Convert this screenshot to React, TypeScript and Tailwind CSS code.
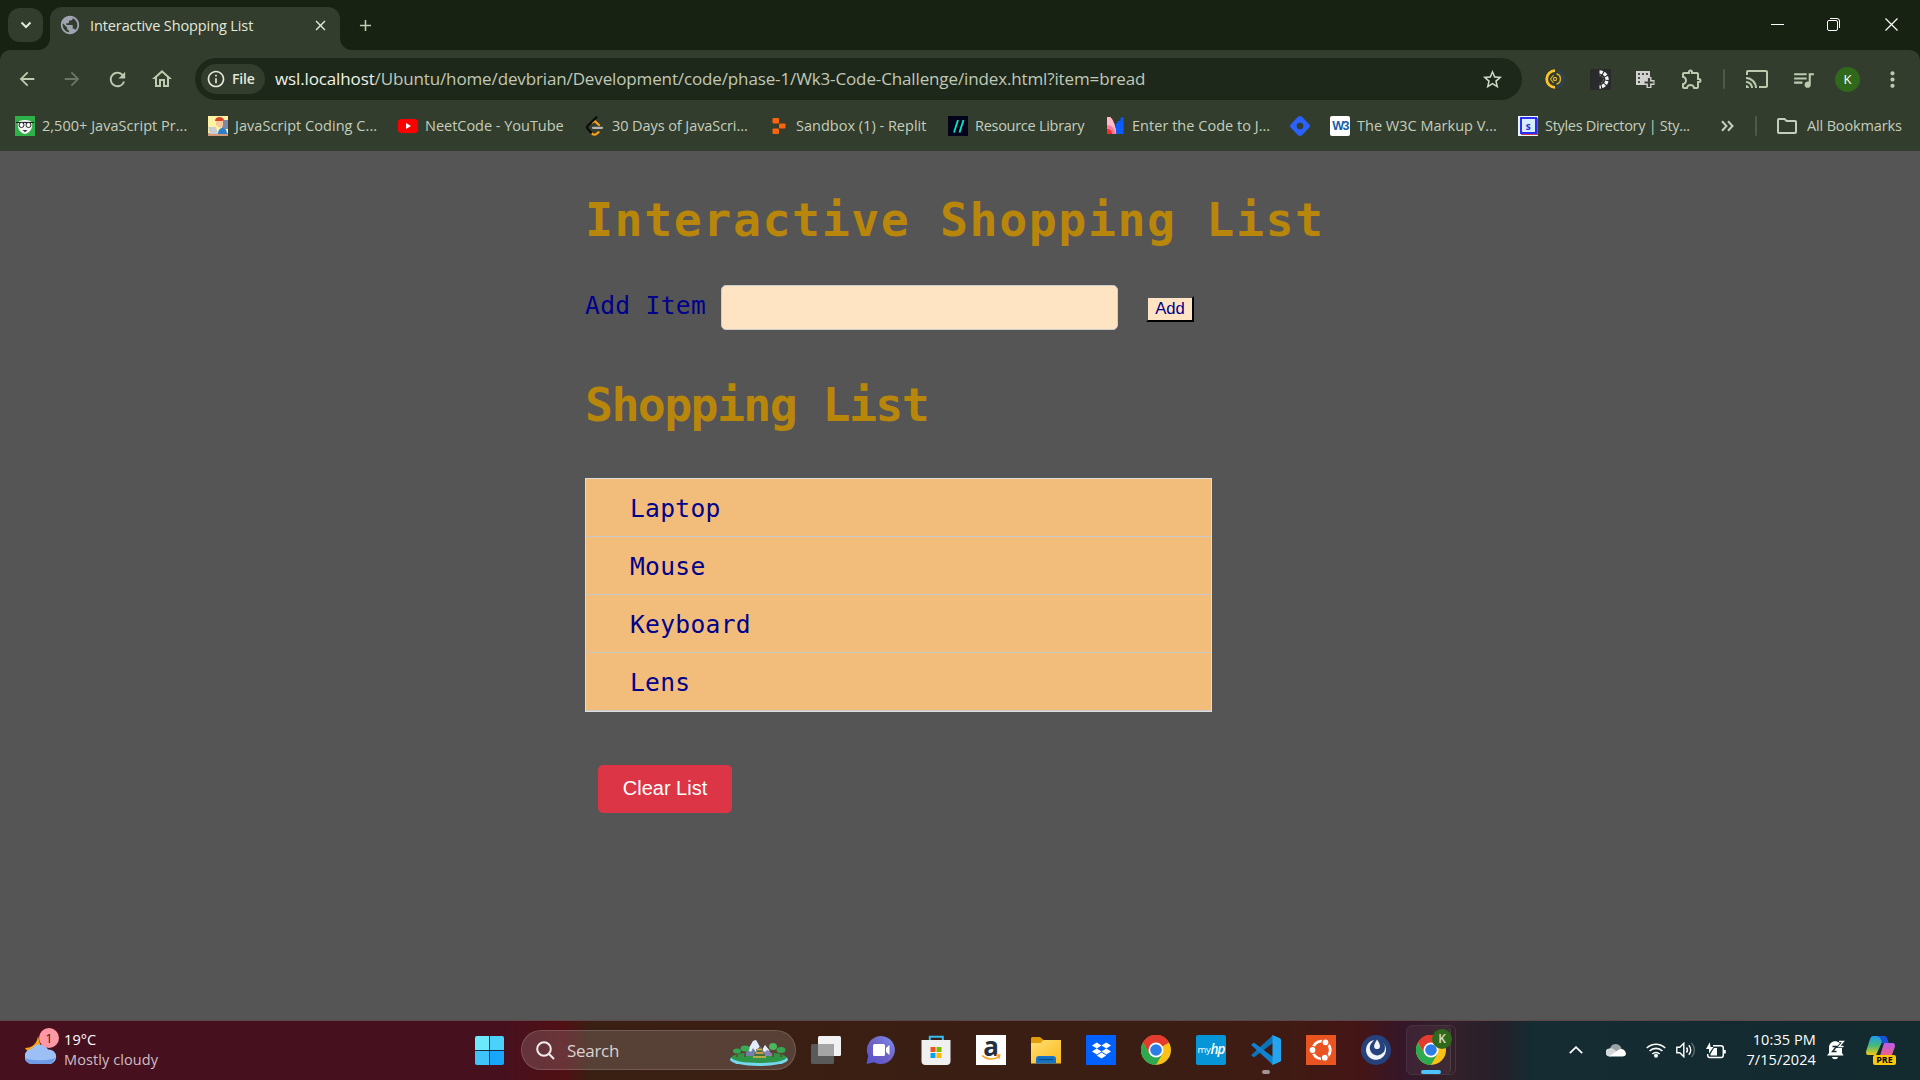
import type { ReactNode } from "react";
import {
  MdArrowBack,
  MdArrowForward,
  MdRefresh,
  MdOutlineHome,
  MdOutlineInfo,
  MdStarBorder,
  MdOutlineExtension,
  MdCast,
  MdQueueMusic,
  MdMoreVert,
  MdPublic,
  MdAdd,
  MdClose,
  MdOutlineFolder,
} from "react-icons/md";
import { FaDropbox } from "react-icons/fa6";

function TabStrip() {
  return (
    <div className="flex h-[50px] bg-[#182212]">
      <div className="ml-2 mt-2 flex h-[34px] w-[35px] items-center justify-center rounded-[12px] bg-[#323d2d]">
        <svg width="12" height="8" viewBox="0 0 12 8" fill="none" stroke="#e3e8dc" strokeWidth="2">
          <path d="M1.5 1.5 6 6l4.500-4.500" />
        </svg>
      </div>
      <div className="relative ml-[7px] mt-[7px] flex h-[43px] w-[290px] items-center rounded-t-[12px] bg-[#323d2d] pb-[7px]">
        <svg className="absolute -left-[12px] bottom-0" width="12" height="12" viewBox="0 0 12 12">
          <path d="M12 0v12H0A12 12 0 0 0 12 0Z" fill="#323d2d" />
        </svg>
        <svg className="absolute -right-[12px] bottom-0" width="12" height="12" viewBox="0 0 12 12">
          <path d="M0 0v12h12A12 12 0 0 1 0 0Z" fill="#323d2d" />
        </svg>
        <MdPublic className="ml-[9px] size-[22px] text-[#9fa4b0]" />
        <span className="ml-[9px] w-[222px] whitespace-nowrap pt-px text-[14.500px] leading-5 tracking-[-0.110px] text-[#e3e8dc]">
          Interactive Shopping List
        </span>
        <MdClose className="size-[17px] text-[#e3e8dc]" />
      </div>
      <MdAdd className="ml-[16px] mt-[16px] size-[19px] text-[#c0cbb4]" />
      <div className="ml-auto flex h-[49px] items-center">
        <div className="mr-[43px] h-px w-[13px] bg-white" />
        <svg className="mr-[45px]" width="13" height="13" viewBox="0 0 13 13" fill="none" stroke="#fff">
          <rect x="0.5" y="2.5" width="10" height="10" rx="1.500" />
          <path d="M3 .5h7a2.500 2.500 0 0 1 2.500 2.500v7" />
        </svg>
        <svg className="mr-[22px]" width="13" height="13" viewBox="0 0 13 13" fill="none" stroke="#fff" strokeWidth="1.200">
          <path d="M.5.5l12 12M12.500.5l-12 12" />
        </svg>
      </div>
    </div>
  );
}

function Toolbar() {
  return (
    <div className="flex h-[58px] items-center text-[#bccbae]">
      <MdArrowBack className="ml-[16px] size-[22px]" />
      <MdArrowForward className="ml-[23px] size-[22px] text-[#6c7664]" />
      <MdRefresh className="ml-[23px] size-[23px]" />
      <MdOutlineHome className="ml-[21px] size-[24px]" />
      <div className="ml-[21px] flex h-[42px] w-[1327px] items-center rounded-full bg-[#1e281a] text-[#e3e8dc]">
        <div className="ml-[6px] flex h-[30px] w-[64px] items-center rounded-full bg-[#323d2d]">
          <MdOutlineInfo className="ml-[5px] size-[20px]" />
          <span className="ml-[6px] text-[14px] leading-5 font-semibold tracking-[-0.200px]">File</span>
        </div>
        <span className="ml-[10px] w-[1200px] whitespace-nowrap text-[17px] leading-6 tracking-[-0.130px] text-[#c0c9b8]">
          <span className="text-[#eef2e8]">wsl.localhost</span>
          /Ubuntu/home/devbrian/Development/code/phase-1/Wk3-Code-Challenge/index.html?item=bread
        </span>
        <MdStarBorder className="ml-auto mr-[18px] size-[23px] text-[#d0d8c8]" />
      </div>
      <svg className="ml-[23px]" width="20" height="20" viewBox="0 0 20 20" fill="none">
        <path d="M10 1.700A8.300 8.300 0 0 0 10 18.300" stroke="#fcc32b" strokeWidth="2.800" />
        <path d="M11.500 1.800A8.300 8.300 0 0 1 11.500 18.200" stroke="#2b4254" strokeWidth="2.600" />
        <path d="M11.500 4.800A5.400 5.400 0 0 1 11.500 15.200" stroke="#e0b02d" strokeWidth="1.500" />
        <path d="M8.500 6 5.500 10l3 4" stroke="#e0b02d" strokeWidth="1.100" />
        <circle cx="10" cy="10" r="1.600" stroke="#e0b02d" strokeWidth="1.200" />
      </svg>
      <svg className="ml-[25px]" width="21" height="21" viewBox="0 0 21 21" fill="none">
        <path d="M0 0h21v21H0z" fill="#2a2a2b" />
        <path d="M9.500 3a7.500 7.500 0 0 1 0 15" stroke="#f4f4f4" strokeWidth="3.400" strokeDasharray="3.300 1.100" />
        <path d="M9.500 6.500a4 4 0 0 1 0 8" stroke="#999" strokeWidth="1" strokeDasharray="1.500 1.500" />
      </svg>
      <svg className="ml-[25px]" width="19" height="19" viewBox="0 0 19 19" fill="none">
        <path d="M0 1h14v14H0z" fill="#d2d2d0" />
        <path d="M2 3h2v2H2zM6 3h2v2H6zM10 3h2v2h-2zM2 7h2v2H2zM2 11h2v2H2z" fill="#4a5146" />
        <path d="M13 7v11M7.500 12.500h11" stroke="#d2d2d0" strokeWidth="5" />
        <path d="M13 8v9M8.500 12.500h9" stroke="#3b4235" strokeWidth="2.200" />
      </svg>
      <MdOutlineExtension className="ml-[25px] size-[24px]" />
      <div className="ml-[19px] h-5 w-[2px] rounded bg-[#4d5a45]" />
      <MdCast className="ml-[20px] size-[24px]" />
      <MdQueueMusic className="ml-[22px] size-[25px]" />
      <div className="ml-[19px] flex size-[25px] items-center justify-center rounded-full bg-[#31691c] text-[13px] leading-none font-medium text-white">
        K
      </div>
      <MdMoreVert className="ml-[20px] size-[25px]" />
    </div>
  );
}

const bookmarks: { label: string; box: string; track: string; icon: ReactNode }[] = [
  {
    label: "2,500+ JavaScript Pr...",
    box: "w-[193px]",
    track: "tracking-[0.030px]",
    icon: (
      <svg width="20" height="20" viewBox="0 0 20 20">
        <path d="M0 0h20v20H0z" fill="#2fb14a" />
        <path d="M3 7c0-4 14-4 14 0 1 5-2 10-7 11C5 17 2 12 3 7Z" fill="#f5f5f5" />
        <path d="M1 6.500h18" stroke="#222" strokeWidth="1.200" />
        <circle cx="6.500" cy="9" r="2.500" fill="#fff" stroke="#222" />
        <circle cx="13.500" cy="9" r="2.500" fill="#fff" stroke="#222" />
        <path d="M7.500 14h5L10 16.200Z" fill="#333" />
      </svg>
    ),
  },
  {
    label: "JavaScript Coding C...",
    box: "w-[190px]",
    track: "tracking-[0.050px]",
    icon: (
      <svg width="20" height="20" viewBox="0 0 20 20">
        <path d="M0 0h20v20H0z" fill="#fdf3a0" />
        <path d="M14 4h6v9h-6z" fill="#7f86a6" />
        <path d="M0 17h20v3H0z" fill="#d29b78" />
        <path d="M8 4h7v6l-3 2-4-3z" fill="#f4c79c" />
        <path d="M7 5c0-5 8-5 9-1l-2 1Z" fill="#d8432b" />
        <path d="M10 18c0-8 9-8 9 0Z" fill="#2c7ed0" />
        <path d="M0 11h8l2 7H2z" fill="#c9cdd3" />
      </svg>
    ),
  },
  {
    label: "NeetCode - YouTube",
    box: "w-[187px]",
    track: "tracking-[-0.020px]",
    icon: (
      <svg width="20" height="20" viewBox="0 0 20 20">
        <rect y="3" width="20" height="14" rx="3.500" fill="#f00" />
        <path d="m8 7 5 3-5 3Z" fill="#fff" />
      </svg>
    ),
  },
  {
    label: "30 Days of JavaScri...",
    box: "w-[183px]",
    track: "tracking-[-0.080px]",
    icon: (
      <svg width="20" height="20" viewBox="0 0 20 20" fill="none" strokeWidth="2.300" strokeLinecap="round">
        <path d="M7 6.500l2.500-1.500L14 9" stroke="#f9a11b" />
        <path d="M7 17.500c2 2 4 1.500 6.500-1.200" stroke="#f9a11b" />
        <path d="M11.500 1.200 3 9.500c-1.200 1.200-1.200 2.500 0 3.800l3 3.300" stroke="#0c0c0c" />
        <path d="M8 11.800h9" stroke="#b3b3b3" />
      </svg>
    ),
  },
  {
    label: "Sandbox (1) - Replit",
    box: "w-[180px] pl-px",
    track: "tracking-[0.010px]",
    icon: (
      <svg width="20" height="20" viewBox="0 0 20 20" fill="#fb650b">
        <rect x="3.500" y="2" width="6.500" height="5.400" rx="1" />
        <rect x="10" y="7.400" width="6.500" height="5.200" rx="1" />
        <rect x="3.500" y="12.600" width="6.500" height="5.400" rx="1" />
      </svg>
    ),
  },
  {
    label: "Resource Library",
    box: "w-[157px]",
    track: "tracking-[-0.280px]",
    icon: (
      <svg width="20" height="20" viewBox="0 0 20 20">
        <path d="M0 0h20v20H0z" fill="#03031a" />
        <path d="M6 16.500 10 4M11.500 16.500 15.500 4" stroke="#0ce0c4" strokeWidth="1.900" />
      </svg>
    ),
  },
  {
    label: "Enter the Code to J...",
    box: "w-[185px]",
    track: "tracking-[0.030px]",
    icon: (
      <svg width="20" height="20" viewBox="0 0 20 20">
        <path d="M2 1h3.500C9 5 11 11 11.500 18H2z" fill="#ffb9cb" />
        <path d="M2 9c5 0 8 4 9 9H2z" fill="#ff7a9c" />
        <path d="M2 13c3 0 5 2 5 5H2z" fill="#ff2a2a" />
        <path d="M18.500 1v17h-7l-1-10 2-1V5h3V2z" fill="#0a5cff" />
      </svg>
    ),
  },
  {
    label: "",
    box: "w-[40px]",
    track: "",
    icon: (
      <svg width="20" height="20" viewBox="0 0 20 20">
        <rect x="2.200" y="2.200" width="15.600" height="15.600" rx="3" transform="rotate(45 10 10)" fill="#2b62ff" />
        <circle cx="10" cy="10" r="3.300" fill="#323d2d" />
      </svg>
    ),
  },
  {
    label: "The W3C Markup V...",
    box: "w-[188px]",
    track: "tracking-[0.010px]",
    icon: (
      <div className="flex size-5 items-center justify-center rounded-[2px] bg-white font-['Liberation_Sans'] text-[12.500px] leading-none font-bold tracking-[-1.500px] text-[#1560a8]">
        W3
      </div>
    ),
  },
  {
    label: "Styles Directory | Sty...",
    box: "w-[203px]",
    track: "tracking-[-0.310px]",
    icon: (
      <div className="flex size-5 items-center justify-center bg-[#e8f8ff] pb-px">
        <div className="flex size-[17px] items-center justify-center border-2 border-[#2d2cf5] bg-[#d5edff] text-[10px] leading-none font-bold text-[#2d2cd8] shadow-[1px_1px_0_#d23a4a]">
          s
        </div>
      </div>
    ),
  },
];

function BookmarksBar() {
  return (
    <div className="flex h-[43px] items-center pb-[7px] pl-[15px] text-[14.500px] leading-5 text-[#c5cebd]">
      {bookmarks.map((b) => (
        <div key={b.box} className={`${b.box} ${b.track} flex shrink-0 items-center gap-[7px] whitespace-nowrap`}>
          <span className="size-5 shrink-0">{b.icon}</span>
          {b.label}
        </div>
      ))}
      <svg className="shrink-0" width="13" height="12" viewBox="0 0 13 12" fill="none" stroke="#c5cebd" strokeWidth="2">
        <path d="m1 1.200 4.500 4.800L1 10.800M7 1.200 11.500 6 7 10.800" />
      </svg>
      <div className="ml-[21px] h-5 w-[2px] shrink-0 rounded bg-[#4d5a45]" />
      <MdOutlineFolder className="ml-[18px] size-[24px] shrink-0" />
      <span className="ml-[8px] whitespace-nowrap tracking-[-0.150px]">All Bookmarks</span>
    </div>
  );
}

const items = ["Laptop", "Mouse", "Keyboard", "Lens"];

function ShoppingPage() {
  return (
    <main className="h-[869px] bg-[#555555] pl-[585px] pt-[32px] font-['DejaVu_Sans_Mono',monospace] text-[#00008b]">
      <h1 className="h-[74px] whitespace-nowrap text-[46.500px] leading-[75px] font-bold tracking-[1.590px] text-[#b8860b]">
        Interactive Shopping List
      </h1>
      <div className="mt-[28px] flex h-[45px] items-start">
        <label className="w-[136px] whitespace-nowrap pt-[3px] text-[24.600px] leading-[36px] tracking-[0.320px]">Add Item</label>
        <div className="h-[45px] w-[397px] rounded-[5px] border border-[#cccccc] bg-[#ffe4c4]" />
        <button className="ml-[28px] mt-[11px] flex h-[26px] w-[48px] items-center justify-center border-2 border-t-[#565656] border-r-black border-b-black border-l-[#565656] bg-[#ffe4c4] font-['Liberation_Sans',Arial,sans-serif] text-[16.700px] leading-none">
          Add
        </button>
      </div>
      <h2 className="mt-[38px] h-[74px] whitespace-nowrap text-[46.500px] leading-[75px] font-bold tracking-[-1.600px] text-[#b8860b]">
        Shopping List
      </h2>
      <ul className="mt-[36px] w-[627px] border border-[#dddddd] bg-[#f2bc7a]">
        {items.map((item) => (
          <li key={item} className="h-[58px] border-b border-dotted border-[#cccccc] pl-[44px] text-[24.600px] leading-[60px] tracking-[0.300px]">
            {item}
          </li>
        ))}
      </ul>
      <button className="ml-[13px] mt-[53px] flex h-[48px] w-[134px] items-center justify-center rounded-[5px] bg-[#dc3545] pb-[2px] font-['Liberation_Sans',Arial,sans-serif] text-[20px] leading-none text-white">
        Clear List
      </button>
    </main>
  );
}

function ChromeIcon() {
  return (
    <svg width="30" height="30" viewBox="0 0 30 30">
      <circle cx="15" cy="15" r="15" fill="#fbc116" />
      <path d="M15 15 2 7.500A15 15 0 0 1 28 7.500Z" fill="#e33b2e" />
      <path d="M15 7.500h13A15 15 0 0 0 2 7.500L8.500 19Z" fill="#e33b2e" />
      <path d="M2 7.500A15 15 0 0 0 15 30l6.500-11.200-6.500-3.800-6.500 3.800Z" fill="#2da94f" />
      <circle cx="15" cy="15" r="7.500" fill="#fff" />
      <circle cx="15" cy="15" r="5.800" fill="#2d7de9" />
    </svg>
  );
}

function Landscape() {
  return (
    <svg width="58" height="28" viewBox="0 0 58 28">
      <ellipse cx="29" cy="20.500" rx="29" ry="6.500" fill="#74d7ee" />
      <ellipse cx="29" cy="18.500" rx="27.500" ry="5.500" fill="#2e9448" />
      <path d="M14 17 23 2l3-1 10 16Z" fill="#7180a8" />
      <path d="m18 11 5-9 3-1 6 11-4-3-2 4-3-4-2 4Z" fill="#e6edfa" />
      <path d="m30 17 5-11 8 11Z" fill="#8a83b8" />
      <path d="m32 11 3-5 5 6-3-1-2 2Z" fill="#e6edfa" />
      <path d="M7 13v5M15 11v7M43 10v8M51 13v5" stroke="#6c4024" strokeWidth="1.500" />
      <ellipse cx="7" cy="12" rx="4" ry="2.500" fill="#35a552" />
      <ellipse cx="15" cy="9.500" rx="4.500" ry="3" fill="#3aa854" />
      <ellipse cx="43" cy="7.500" rx="4" ry="3.500" fill="#49b85a" />
      <ellipse cx="51" cy="11" rx="4.500" ry="3" fill="#35a552" />
      <path d="M24 17h11l-1-4h-2l1-3h-2l-1-3-2 3h-2l1 3h-2Z" fill="#4b6b3a" />
      <path d="M23 18h13M25.500 14h8M27 10.500h5" stroke="#e8b04b" strokeWidth="1.500" />
    </svg>
  );
}

const taskIcons: { id: string; icon: ReactNode }[] = [
  {
    id: "views",
    icon: (
      <svg width="30" height="30" viewBox="0 0 30 30">
        <rect x="7" y="1" width="23" height="20" rx="1.500" fill="#f2f2f2" />
        <rect x="0" y="9" width="23" height="20" rx="1.500" fill="#5a5a5a" />
        <path d="M7 9h16v12H7z" fill="#a5a5a5" />
      </svg>
    ),
  },
  {
    id: "chat",
    icon: (
      <svg width="30" height="30" viewBox="0 0 30 30">
        <defs>
          <linearGradient id="chatFill" x1="1" y1="0" x2="0" y2="1">
            <stop stopColor="#7b8df5" />
            <stop offset="0.5" stopColor="#6f62c4" />
            <stop offset="1" stopColor="#5552d0" />
          </linearGradient>
        </defs>
        <path d="M15 1a14 14 0 1 1-7 26.200L.5 29l1.700-8A14 14 0 0 1 15 1Z" fill="url(#chatFill)" />
        <rect x="7" y="9" width="12" height="12" rx="1.500" fill="#fff" />
        <path d="m20 13 3.500-3v10L20 17Z" fill="#fff" />
      </svg>
    ),
  },
  {
    id: "store",
    icon: (
      <svg width="30" height="30" viewBox="0 0 30 30">
        <path d="M8.800 6V1.800h13V6" fill="none" stroke="#35bdf5" strokeWidth="2" />
        <path d="M.5 5h29v21a4 4 0 0 1-4 4h-21a4 4 0 0 1-4-4Z" fill="#f0f0f0" />
        <path d="M9.500 12h5v5h-5z" fill="#f25022" />
        <path d="M15.500 12h5v5h-5z" fill="#7fba00" />
        <path d="M9.500 18h5v5h-5z" fill="#00a4ef" />
        <path d="M15.500 18h5v5h-5z" fill="#ffb900" />
      </svg>
    ),
  },
  {
    id: "amazon",
    icon: (
      <div className="relative flex size-[30px] justify-center bg-white font-['Open_Sans'] text-[26px] leading-[22px] font-bold text-[#252f3e]">
        a
        <svg className="absolute bottom-[4px] left-[5px]" width="20" height="7" viewBox="0 0 20 7" fill="none" stroke="#ff9d1c" strokeWidth="1.600">
          <path d="M1 1.500c5 4.500 12 4.500 17 .8M15 1h3.500L17.800 4.500" />
        </svg>
      </div>
    ),
  },
  {
    id: "files",
    icon: (
      <svg width="30" height="30" viewBox="0 0 30 30">
        <defs>
          <linearGradient id="folderFill" x1="0" y1="0" x2="1" y2="1">
            <stop stopColor="#ffdf73" />
            <stop offset="1" stopColor="#fbb91c" />
          </linearGradient>
        </defs>
        <path d="M0 3.500A1.500 1.500 0 0 1 1.500 2H9l3.500 3H28v6H0Z" fill="#e09c0a" />
        <path d="M0 8h9.500l3-3H30v23.500H0Z" fill="url(#folderFill)" />
        <path d="M5 28.500V24a3 3 0 0 1 3-3h14a3 3 0 0 1 3 3v4.500Z" fill="#1473c4" />
        <path d="M8 24.500h14" stroke="#0b4d87" strokeWidth="1.300" />
      </svg>
    ),
  },
  {
    id: "dropbox",
    icon: (
      <div className="flex size-[30px] items-center justify-center bg-[#0061fe] text-white">
        <FaDropbox className="size-[19px]" />
      </div>
    ),
  },
  { id: "chrome", icon: <ChromeIcon /> },
  {
    id: "myhp",
    icon: (
      <div className="flex size-[30px] items-center justify-center rounded-[2px] bg-[#0696d7] leading-none text-white">
        <span className="text-[9.500px] tracking-[-0.300px]">my</span>
        <span className="text-[13.500px] font-semibold tracking-[-1px] italic">hp</span>
      </div>
    ),
  },
  {
    id: "code",
    icon: (
      <svg width="30" height="30" viewBox="0 0 30 30">
        <path d="M22 0 .5 19.800v.9L2.300 22q.6.400 1.200 0L22 8Z" fill="#0b73b8" />
        <path d="M22 30 .5 10.200v-.9L2.300 8q.6-.4 1.200 0L22 22Z" fill="#0f83cf" />
        <path d="M21.500.1 29 3.300q1 .5 1 1.500v20.400q0 1-1 1.500l-7.500 3.200Z" fill="#25a5f0" />
      </svg>
    ),
  },
  {
    id: "ubuntu",
    icon: (
      <svg width="30" height="30" viewBox="0 0 30 30">
        <path d="M0 0h30v30H0z" fill="#e95420" />
        <circle cx="15.500" cy="15" r="8.800" fill="none" stroke="#fff" strokeWidth="2.800" />
        <g fill="#fff" stroke="#e95420" strokeWidth="1.200">
          <circle cx="6.500" cy="15" r="3.500" />
          <circle cx="19.500" cy="7.300" r="3.500" />
          <circle cx="18.800" cy="22.700" r="3.500" />
        </g>
      </svg>
    ),
  },
  {
    id: "team",
    icon: (
      <svg width="30" height="30" viewBox="0 0 30 30">
        <circle cx="15" cy="15" r="15" fill="#26427c" />
        <path d="M13 5A10 10 0 1 0 21.500 7.200a7.600 7.600 0 1 1-11.500 1.500Z" fill="#f2f4f7" />
        <path d="M16 4.500c2.500 3.500 3.500 6 2.800 8-.8 2-4.500 2.300-5.500 0-.8-2.300.7-4.500 2.700-8Z" fill="#f2f4f7" />
      </svg>
    ),
  },
];

function Taskbar() {
  return (
    <footer className="flex h-[60px] items-center border-t border-[#5b464a] bg-[linear-gradient(90deg,#47101f_0px,#47101f_500px,#501014_565px,#3a1f13_590px,#3a1e13_1150px,#401a13_1300px,#451516_1360px,#34172a_1405px,#33202a_1450px,#25202a_1500px,#142c32_1535px,#132b2f_1920px)] pb-px text-[14.500px] leading-5 text-white">
      <div className="flex w-[475px] items-center pl-[25px]">
        <div className="relative h-[36px] w-[34px]">
          <svg width="34" height="36" viewBox="0 0 34 36">
            <path d="M13 4c-1 8-6 12-13 12 3 5 10 7 17 4Z" fill="#f6a71c" />
            <path d="M7 32a7.500 7.500 0 1 1 0-15C10 11 20 11 23 17.500A7.300 7.300 0 1 1 23 32Z" fill="#9cc0f5" />
            <path d="M7 32a7.500 7.500 0 0 1-7-6c6 3 24 3 30 0a7.300 7.300 0 0 1-7 6Z" fill="#6f9be6" />
          </svg>
          <div className="absolute -top-[4px] left-[14px] flex size-[20px] items-center justify-center rounded-full bg-[#ff98a4] text-[13px] leading-none text-[#3b1418]">
            1
          </div>
        </div>
        <div className="ml-[5px] whitespace-nowrap tracking-[0.090px]">
          <div>19°C</div>
          <div className="text-[#cdbfc3]">Mostly cloudy</div>
        </div>
      </div>
      <div className="grid size-[29px] grid-cols-2 gap-px bg-[#1c2a45]">
        <div className="rounded-tl-[2px] bg-[#6ceafd]" />
        <div className="rounded-tr-[2px] bg-[#4bd1fb]" />
        <div className="rounded-bl-[2px] bg-[#3fc3fb]" />
        <div className="rounded-br-[2px] bg-[#18a6fb]" />
      </div>
      <div className="ml-[17px] flex h-[40px] w-[275px] items-center rounded-full border border-white/15 bg-white/15 text-[#dcd3d1]">
        <svg className="ml-[14px]" width="19" height="19" viewBox="0 0 19 19" fill="none" stroke="#f0ecec" strokeWidth="2">
          <circle cx="8" cy="8" r="6.800" />
          <path d="m12.800 12.800 5.200 5.200" />
        </svg>
        <span className="ml-[12px] w-[163px] pt-px text-[17px] tracking-[-0.300px]">Search</span>
        <div className="pt-[5px]">
          <Landscape />
        </div>
      </div>
      <div className="relative ml-[15px] flex items-center gap-[25px]">
        {taskIcons.map((t) => (
          <div key={t.id} className="size-[30px]">
            {t.icon}
          </div>
        ))}
        <div className="absolute -bottom-[9px] left-[451px] h-[4px] w-[8px] rounded-full bg-[#a59494]" />
      </div>
      <div className="ml-[15px] h-[50px] w-[50px] rounded-[6px] border border-white/10">
        <div className="relative h-[48px] w-[44px] rounded-[5px] border-r border-white/10 bg-white/5 pl-[9px] pt-[9px]">
          <ChromeIcon />
          <div className="absolute left-[25px] top-[3px] flex size-5 items-center justify-center rounded-full bg-[#31691c] text-[12px] leading-none font-semibold text-[#d5dfd0]">
            K
          </div>
          <div className="absolute bottom-0 left-[14px] h-[4px] w-[20px] rounded-full bg-[#4cc2ff]" />
        </div>
      </div>
      <div className="ml-[113px] flex items-center">
        <svg width="14" height="8" viewBox="0 0 14 8" fill="none" stroke="#fff" strokeWidth="1.800">
          <path d="m.8 7.200 6.200-6 6.200 6" />
        </svg>
        <svg className="ml-[23px]" width="20" height="14" viewBox="0 0 20 14">
          <path d="M4 9C3 4 6 1 9.500 1c3 0 5 1.500 6 4.500l-3 4Z" fill="#98a3a5" />
          <path d="M4 13.500a4 4 0 0 1-.8-8c2-.5 4 0 5.500 1.500l4 2.500Z" fill="#d4d8d9" />
          <path d="M3 13c3-1 6-4 10-6.500 3-1.500 6.500.5 7 4 0 2-1.500 3-3.500 3H4Z" fill="#fff" />
        </svg>
        <svg className="ml-[20px]" width="20" height="16" viewBox="0 0 20 16" fill="none" stroke="#fff" strokeWidth="1.600">
          <path d="M.8 6a13 13 0 0 1 18.400 0M3.600 9a9 9 0 0 1 12.800 0M6.400 12a5 5 0 0 1 7.200 0" />
          <circle cx="10" cy="13.800" r="2" fill="#fff" stroke="none" />
        </svg>
        <svg className="ml-[10px]" width="20" height="16" viewBox="0 0 20 16" fill="none" stroke="#fff" strokeWidth="1.400">
          <path d="M.8 5.300h3l4-4v13.400l-4-4h-3Z" />
          <path d="M10.500 5.500a4 4 0 0 1 0 5M12.800 3.200a7 7 0 0 1 0 9.600" />
          <path d="M15.500 1a10 10 0 0 1 0 14" stroke="#5d6e70" />
        </svg>
        <svg className="ml-[10px]" width="20" height="17" viewBox="0 0 20 17" fill="none" stroke="#fff" strokeWidth="1.500">
          <path d="M7 3.800h8a2.300 2.300 0 0 1 2.300 2.300v7.200a2.300 2.300 0 0 1-2.300 2.300H4a2.300 2.300 0 0 1-2.300-2.300V12" />
          <path d="M4.500 13.500V12L8 6h3v7.500Z" fill="#fff" stroke="none" />
          <path d="M3.800.3 0 7h3v4.500L7.500 5h-3Z" fill="#fff" stroke="none" />
          <path d="M18.800 8v3.500" strokeWidth="2" />
        </svg>
        <div className="w-[90px] whitespace-nowrap text-right tracking-[0.100px]">
          <div>10:35 PM</div>
          <div>7/15/2024</div>
        </div>
        <div className="ml-[11px] h-[20px] w-[18px]">
          <svg width="18" height="20" viewBox="0 0 18 20">
            <path d="M2 8c0-9 12-9 13 0v5l1.500 2.500H0L2 13Z" fill="#fff" />
            <path d="M5 17h6c-.5 3-5.500 3-6 0Z" fill="#fff" />
            <path d="M5.500 6.500h4L5.500 11.500h4" fill="none" stroke="#132b2f" strokeWidth="1.400" />
            <path d="M12 1.500h4.500L12 6.500h4.500" fill="none" stroke="#132b2f" strokeWidth="3" />
            <path d="M12 1.500h4.500L12 6.500h4.500" fill="none" stroke="#fff" strokeWidth="1.300" />
          </svg>
        </div>
        <div className="relative ml-[21px] h-[29px] w-[30px]">
          <svg width="30" height="26" viewBox="0 0 30 26">
            <defs>
              <linearGradient id="pilotLeft" x1="0" y1="0" x2="0" y2="1">
                <stop stopColor="#1f9bf0" />
                <stop offset="0.5" stopColor="#45b97a" />
                <stop offset="1" stopColor="#f2c811" />
              </linearGradient>
              <linearGradient id="pilotRight" x1="0" y1="0" x2="0" y2="1">
                <stop stopColor="#b45cf0" />
                <stop offset="1" stopColor="#f5607c" />
              </linearGradient>
            </defs>
            <path d="M7 0h10c3 0 4 2 5 6h-6L10 19H3c-3 0-3.500-2-2.500-5L4 3Q5 0 7 0Z" fill="url(#pilotLeft)" />
            <path d="M11 0h7c3 0 3.500 3 4.500 7H16Q15 1 11 0Z" fill="#1a52d8" />
            <path d="M18 7h8c3 0 3.500 2 2.500 5l-3 8H14Z" fill="url(#pilotRight)" />
          </svg>
          <div className="absolute bottom-0 left-[7px] flex h-[10px] w-[23px] items-center justify-center rounded-[2px] bg-[#fdc70a] text-[9px] leading-none font-bold text-black">
            PRE
          </div>
        </div>
      </div>
    </footer>
  );
}

export default function App() {
  return (
    <div className="flex h-[1080px] w-[1920px] flex-col overflow-hidden bg-[#182212] font-['Open_Sans','Noto_Sans',sans-serif]">
      <TabStrip />
      <div className="h-[101px] rounded-t-[10px] bg-[#323d2d]">
        <Toolbar />
        <BookmarksBar />
      </div>
      <ShoppingPage />
      <Taskbar />
    </div>
  );
}
